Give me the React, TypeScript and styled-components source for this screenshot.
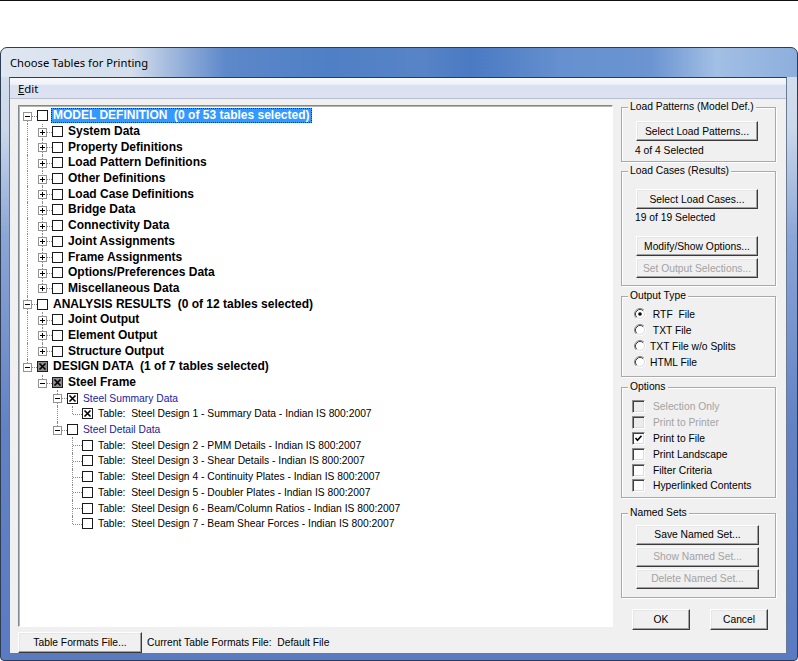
import React from "react";
import styled, { createGlobalStyle, css } from "styled-components";

const GlobalStyle = createGlobalStyle`
  html, body {
    margin: 0;
    padding: 0;
    background: #fff;
  }
  body {
    font-family: "Liberation Sans", Arial, sans-serif;
  }
`;

const ROW_H = 15.7;
const INDENT = 15;
const LINE = "#8a8a8a";

type Check = "none" | "full" | "partial";

interface TreeNode {
  label: string;
  bold?: boolean;
  blue?: boolean;
  selected?: boolean;
  check?: Check;
  collapsed?: boolean;
  children?: TreeNode[];
}

interface FlatRow {
  node: TreeNode;
  depth: number;
  guides: boolean[];
  isLast: boolean;
  isFirstRoot: boolean;
}

const folder = (label: string): TreeNode => ({
  label,
  bold: true,
  collapsed: true,
  children: [],
});

const table = (label: string, check: Check = "none"): TreeNode => ({
  label: `Table:  ${label}`,
  check,
});

const TREE: TreeNode[] = [
  {
    label: "MODEL DEFINITION  (0 of 53 tables selected)",
    bold: true,
    selected: true,
    children: [
      "System Data",
      "Property Definitions",
      "Load Pattern Definitions",
      "Other Definitions",
      "Load Case Definitions",
      "Bridge Data",
      "Connectivity Data",
      "Joint Assignments",
      "Frame Assignments",
      "Options/Preferences Data",
      "Miscellaneous Data",
    ].map(folder),
  },
  {
    label: "ANALYSIS RESULTS  (0 of 12 tables selected)",
    bold: true,
    children: ["Joint Output", "Element Output", "Structure Output"].map(folder),
  },
  {
    label: "DESIGN DATA  (1 of 7 tables selected)",
    bold: true,
    check: "partial",
    children: [
      {
        label: "Steel Frame",
        bold: true,
        check: "partial",
        children: [
          {
            label: "Steel Summary Data",
            blue: true,
            check: "full",
            children: [
              table("Steel Design 1 - Summary Data - Indian IS 800:2007", "full"),
            ],
          },
          {
            label: "Steel Detail Data",
            blue: true,
            children: [
              table("Steel Design 2 - PMM Details - Indian IS 800:2007"),
              table("Steel Design 3 - Shear Details - Indian IS 800:2007"),
              table("Steel Design 4 - Continuity Plates - Indian IS 800:2007"),
              table("Steel Design 5 - Doubler Plates - Indian IS 800:2007"),
              table("Steel Design 6 - Beam/Column Ratios - Indian IS 800:2007"),
              table("Steel Design 7 - Beam Shear Forces - Indian IS 800:2007"),
            ],
          },
        ],
      },
    ],
  },
];

function flatten(
  nodes: TreeNode[],
  depth: number,
  guides: boolean[],
  out: FlatRow[]
): FlatRow[] {
  nodes.forEach((node, i) => {
    const isLast = i === nodes.length - 1;
    out.push({ node, depth, guides, isLast, isFirstRoot: depth === 0 && i === 0 });
    if (node.children && !node.collapsed) {
      flatten(node.children, depth + 1, [...guides, !isLast], out);
    }
  });
  return out;
}

const ROWS = flatten(TREE, 0, [], []);

/* ---------- window chrome ---------- */

const Page = styled.div`
  width: 798px;
  height: 661px;
  overflow: hidden;
`;

const TopRule = styled.div`
  height: 1px;
  background: #111;
  margin-bottom: 46px;
`;

const Window = styled.div`
  box-sizing: border-box;
  width: 798px;
  height: 614px;
  display: flex;
  flex-direction: column;
  padding: 0 10px 6px 8px;
  border: 1px solid #2e3c52;
  border-radius: 7px 7px 4px 4px;
  background: linear-gradient(
        90deg,
        #dfe7f1 0px,
        #d4deec 130px,
        #8eabd8 185px,
        #5d88ca 225px,
        #4f7fc5 330px,
        #5884c7 420px,
        #4a7ac3 470px,
        #6690cf 560px,
        #6b94d1 650px,
        #a2bfe4 715px,
        #8daedd 798px
      )
      0 0 / 100% 29px no-repeat,
    linear-gradient(
      180deg,
      #d7e1ee 0px,
      #cad8ea 80px,
      #8aa5d6 190px,
      #6382c4 380px,
      #5a7bc2 100%
    );
`;

const TitleBar = styled.div`
  height: 29px;
  display: flex;
  align-items: center;
  padding-left: 1px;
  font: 11.2px "Noto Sans", "Open Sans", sans-serif;
  color: #000;
`;

const Client = styled.div`
  flex: 1;
  display: flex;
  flex-direction: column;
  background: #f0f0f0;
  border: 1px solid #6a7a93;
  border-top-color: #2f3c50;
`;

const MenuBar = styled.div`
  height: 20px;
  display: flex;
  align-items: center;
  padding-left: 8px;
  border-bottom: 1px solid #b9c0d0;
  background: linear-gradient(180deg, #f8f9fc 0%, #eef1f8 32%, #dbe1f1 36%, #dce2f1 100%);
  font: 11.4px "Noto Sans", "Open Sans", sans-serif;
  color: #000;
`;

const MenuItem = styled.span`
  u {
    text-decoration: underline;
  }
`;

const Body = styled.div`
  flex: 1;
  display: flex;
  gap: 8px;
  padding: 6px 0 0 8px;
  font-size: 10.3px;
`;

const LeftColumn = styled.div`
  width: 595px;
  display: flex;
  flex-direction: column;
  gap: 5px;
`;

/* ---------- tree ---------- */

const TreePanel = styled.div`
  box-sizing: border-box;
  height: 522px;
  padding: 2px 0 0 1px;
  background: #fff;
  border: 1px solid;
  border-color: #828790 #fff #fff #828790;
  box-shadow: inset 1px 1px #b4b4b4;
  overflow: hidden;
`;

const TreeRow = styled.div`
  height: ${ROW_H}px;
  display: flex;
  align-items: center;
`;

const Guide = styled.span<{ $line: boolean }>`
  position: relative;
  width: ${INDENT}px;
  align-self: stretch;
  flex: none;
  ${(p) =>
    p.$line &&
    css`
      &::before {
        content: "";
        position: absolute;
        left: 7px;
        top: 0;
        bottom: 0;
        border-left: 1px dotted ${LINE};
      }
    `}
`;

const Elbow = styled.span<{ $up: boolean; $down: boolean }>`
  position: relative;
  width: ${INDENT}px;
  align-self: stretch;
  flex: none;

  &::before {
    content: "";
    position: absolute;
    left: 7px;
    top: ${(p) => (p.$up ? "0" : "50%")};
    bottom: ${(p) => (p.$down ? "0" : "50%")};
    border-left: 1px dotted ${LINE};
  }

  &::after {
    content: "";
    position: absolute;
    left: 8px;
    right: -2px;
    top: 50%;
    border-top: 1px dotted ${LINE};
  }
`;

const Expander = styled.svg`
  position: absolute;
  left: 3px;
  top: 50%;
  margin-top: -4px;
  z-index: 1;
`;

const TreeCheck = styled.span<{ $state: Check }>`
  box-sizing: border-box;
  width: 11px;
  height: 11px;
  flex: none;
  margin-left: 2px;
  border: 1px solid #1b1b1b;
  background: ${(p) => (p.$state === "partial" ? "#8c8c8c" : "#fff")};
  display: flex;

  svg {
    display: block;
  }
`;

const NodeLabel = styled.span<{ $bold?: boolean; $blue?: boolean; $selected?: boolean }>`
  margin-left: 3px;
  padding: 0 2px;
  height: 15px;
  line-height: 15px;
  white-space: pre;
  font-family: "Liberation Sans", Arial, sans-serif;
  font-size: ${(p) => (p.$bold ? "12px" : "10.3px")};
  font-weight: ${(p) => (p.$bold ? 700 : 400)};
  color: ${(p) => (p.$blue ? "#1a1aa0" : "#000")};
  ${(p) =>
    p.$selected &&
    css`
      background: #3399ff;
      color: #fff;
      outline: 1px dotted #1c2f55;
      outline-offset: -1px;
    `}
`;

const ExpanderIcon: React.FC<{ open: boolean }> = ({ open }) => (
  <Expander width="9" height="9" viewBox="0 0 9 9">
    <rect x="0.5" y="0.5" width="8" height="8" fill="#fff" stroke="#939393" />
    <path d="M2 4.5h5" stroke="#000" />
    {!open && <path d="M4.5 2v5" stroke="#000" />}
  </Expander>
);

const TreeCheckBox: React.FC<{ state: Check }> = ({ state }) => (
  <TreeCheck $state={state}>
    {state !== "none" && (
      <svg width="9" height="9" viewBox="0 0 9 9">
        <path d="M1.5 1.5l6 6M7.5 1.5l-6 6" stroke="#000" strokeWidth="1.6" />
      </svg>
    )}
  </TreeCheck>
);

const Tree: React.FC = () => (
  <TreePanel>
    {ROWS.map(({ node, guides, isLast, isFirstRoot }, i) => (
      <TreeRow key={i}>
        {guides.map((line, g) => (
          <Guide key={g} $line={line} />
        ))}
        <Elbow $up={!isFirstRoot} $down={!isLast}>
          {node.children && <ExpanderIcon open={!node.collapsed} />}
        </Elbow>
        <TreeCheckBox state={node.check ?? "none"} />
        <NodeLabel $bold={node.bold} $blue={node.blue} $selected={node.selected}>
          {node.label}
        </NodeLabel>
      </TreeRow>
    ))}
  </TreePanel>
);

/* ---------- buttons and bottom bar ---------- */

const Button = styled.button<{ $w: number; $h?: number; $mt?: number }>`
  box-sizing: border-box;
  display: block;
  flex: none;
  width: ${(p) => p.$w}px;
  height: ${(p) => p.$h ?? 20}px;
  margin-top: ${(p) => p.$mt ?? 0}px;
  padding: 0;
  font: 10.3px "Liberation Sans", Arial, sans-serif;
  color: #000;
  background: #f0f0f0;
  border: 1px solid;
  border-color: #fff #3a3a3a #3a3a3a #fff;
  box-shadow: inset -1px -1px #a0a0a0, inset 1px 1px #e6e6e6;

  &:disabled {
    color: #a3a3a3;
  }
`;

const BottomBar = styled.div`
  height: 21px;
  display: flex;
  align-items: center;
  gap: 5px;
`;

const StatusText = styled.span`
  white-space: pre;
  color: #000;
`;

/* ---------- right panel ---------- */

const RightColumn = styled.div`
  width: 155px;
  display: flex;
  flex-direction: column;
`;

const GroupBox = styled.div<{ $mt: number; $pt: number; $pb: number; $pl: number }>`
  position: relative;
  display: flex;
  flex-direction: column;
  align-items: flex-start;
  margin-top: ${(p) => p.$mt}px;
  padding: ${(p) => `${p.$pt}px 0 ${p.$pb}px ${p.$pl}px`};
  border: 1px solid #a9a9a9;
  box-shadow: inset 1px 1px #fff, 1px 1px #fff;
`;

const GroupTitle = styled.span`
  position: absolute;
  top: -7px;
  left: 6px;
  padding: 0 2px;
  line-height: 12px;
  background: #f0f0f0;
  color: #000;
  white-space: nowrap;
`;

const InfoText = styled.span<{ $mt: number }>`
  margin-top: ${(p) => p.$mt}px;
  margin-left: -1px;
  line-height: 13px;
  color: #000;
`;

const OptionRow = styled.div<{ $h: number; $disabled?: boolean }>`
  height: ${(p) => p.$h}px;
  display: flex;
  align-items: center;
  white-space: pre;
  color: ${(p) => (p.$disabled ? "#a3a3a3" : "#000")};
`;

const RadioMark = styled.svg`
  flex: none;
  margin-right: 4px;
`;

const CheckMark = styled.span<{ $disabled?: boolean }>`
  box-sizing: border-box;
  width: 13px;
  height: 13px;
  flex: none;
  margin-right: 8px;
  display: flex;
  align-items: center;
  justify-content: center;
  border: 1px solid;
  border-color: #8a8a8a #fff #fff #8a8a8a;
  box-shadow: inset 1px 1px #404040, inset -1px -1px #dcdcdc;
  background: ${(p) => (p.$disabled ? "#ececec" : "#fff")};
`;

const DialogButtons = styled.div`
  display: flex;
  gap: 20px;
  margin-top: 11px;
  padding-left: 11px;
`;

const Radio: React.FC<{ label: string; on?: boolean }> = ({ label, on }) => (
  <OptionRow $h={16}>
    <RadioMark width="12" height="12" viewBox="0 0 12 12">
      <circle cx="6" cy="6" r="4.5" fill="#fff" />
      <path d="M2.11 9.89A5.5 5.5 0 0 1 9.89 2.11" fill="none" stroke="#8a8a8a" />
      <path d="M9.89 2.11A5.5 5.5 0 0 1 2.11 9.89" fill="none" stroke="#fff" />
      <path d="M2.82 9.18A4.5 4.5 0 0 1 9.18 2.82" fill="none" stroke="#404040" />
      <path d="M9.18 2.82A4.5 4.5 0 0 1 2.82 9.18" fill="none" stroke="#dcdcdc" />
      {on && <circle cx="6" cy="6" r="1.8" fill="#000" />}
    </RadioMark>
    {label}
  </OptionRow>
);

const Option: React.FC<{ label: string; checked?: boolean; disabled?: boolean }> = ({
  label,
  checked,
  disabled,
}) => (
  <OptionRow $h={15.8} $disabled={disabled}>
    <CheckMark $disabled={disabled}>
      {checked && (
        <svg width="9" height="9" viewBox="0 0 9 9">
          <path d="M1.5 4l2 2.2L7.5 1.8" fill="none" stroke="#000" strokeWidth="1.6" />
        </svg>
      )}
    </CheckMark>
    {label}
  </OptionRow>
);

const RightPanel: React.FC = () => (
  <RightColumn>
    <GroupBox $mt={2} $pt={13} $pb={4} $pl={14}>
      <GroupTitle>Load Patterns (Model Def.)</GroupTitle>
      <Button $w={122}>Select Load Patterns...</Button>
      <InfoText $mt={3}>4 of 4 Selected</InfoText>
    </GroupBox>

    <GroupBox $mt={9} $pt={17} $pb={7} $pl={14}>
      <GroupTitle>Load Cases (Results)</GroupTitle>
      <Button $w={122}>Select Load Cases...</Button>
      <InfoText $mt={2}>19 of 19 Selected</InfoText>
      <Button $w={122} $mt={12}>
        Modify/Show Options...
      </Button>
      <Button $w={122} $mt={2} disabled>
        Set Output Selections...
      </Button>
    </GroupBox>

    <GroupBox $mt={10} $pt={9} $pb={6} $pl={12}>
      <GroupTitle>Output Type</GroupTitle>
      <Radio label={"\u00a0RTF  File"} on />
      <Radio label={"\u00a0TXT File"} />
      <Radio label="TXT File w/o Splits" />
      <Radio label="HTML File" />
    </GroupBox>

    <GroupBox $mt={10} $pt={11} $pb={3} $pl={10}>
      <GroupTitle>Options</GroupTitle>
      <Option label="Selection Only" disabled />
      <Option label="Print to Printer" disabled />
      <Option label="Print to File" checked />
      <Option label="Print Landscape" />
      <Option label="Filter Criteria" />
      <Option label="Hyperlinked Contents" />
    </GroupBox>

    <GroupBox $mt={15} $pt={11} $pb={8} $pl={14}>
      <GroupTitle>Named Sets</GroupTitle>
      <Button $w={123}>Save Named Set...</Button>
      <Button $w={123} $mt={2} disabled>
        Show Named Set...
      </Button>
      <Button $w={123} $mt={2} disabled>
        Delete Named Set...
      </Button>
    </GroupBox>

    <DialogButtons>
      <Button $w={58} $h={21}>
        OK
      </Button>
      <Button $w={58} $h={21}>
        Cancel
      </Button>
    </DialogButtons>
  </RightColumn>
);

export default function App() {
  return (
    <Page>
      <GlobalStyle />
      <TopRule />
      <Window>
        <TitleBar>Choose Tables for Printing</TitleBar>
        <Client>
          <MenuBar>
            <MenuItem>
              <u>E</u>dit
            </MenuItem>
          </MenuBar>
          <Body>
            <LeftColumn>
              <Tree />
              <BottomBar>
                <Button $w={124} $h={21}>
                  Table Formats File...
                </Button>
                <StatusText>Current Table Formats File:  Default File</StatusText>
              </BottomBar>
            </LeftColumn>
            <RightPanel />
          </Body>
        </Client>
      </Window>
    </Page>
  );
}
